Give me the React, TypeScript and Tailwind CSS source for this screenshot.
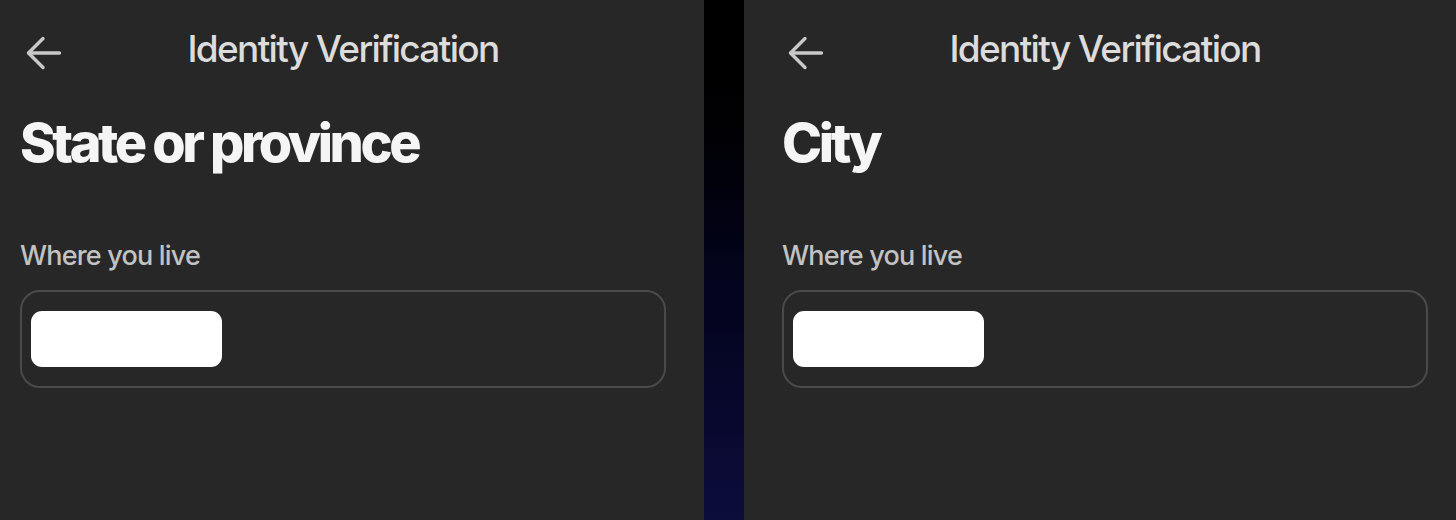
function BackArrow() {
  return (
    <svg viewBox="0 0 36 36" className="w-[36px] h-[36px] ml-[6px] mt-[6px]" fill="none" stroke="#c9c9c9" strokeWidth="3.4" strokeLinecap="round" strokeLinejoin="round">
      <path d="M33.5 18H3" />
      <path d="M17 3.5L2.5 18L17 32.5" />
    </svg>
  )
}

function Screen({ title }: { title: string }) {
  return (
    <div className="w-[722px] shrink-0 h-full bg-[#272727] px-[38px]">
      <div className="relative h-[100px] flex items-center">
        <BackArrow />
        <span className="absolute inset-x-0 top-[24px] text-center text-[37px] leading-[50px] font-medium tracking-[-0.045em] text-[#dcdcdc]">
          Identity Verification
        </span>
      </div>
      <h1 className="mt-[10px] text-[54px] leading-[66px] font-extrabold tracking-[-0.063em] text-[#f5f5f5]">{title}</h1>
      <div className="mt-[62px] text-[27px] leading-[36px] font-medium tracking-[-0.03em] text-[#c2c2c2]">Where you live</div>
      <div className="mt-[16px] w-[646px] h-[98px] rounded-[20px] border-2 border-[#4a4a4a] flex items-center px-[9px]">
        <div className="w-[191px] h-[56px] rounded-[11px] bg-white" />
      </div>
    </div>
  )
}

export default function App() {
  return (
    <div
      className="w-[1456px] h-[520px] overflow-hidden flex bg-[#272727]"
      style={{ fontFamily: 'Inter, "Liberation Sans", sans-serif' }}
    >
      <div className="ml-[-18px] flex h-full">
        <Screen title="State or province" />
        <div className="w-[40px] shrink-0 h-full bg-gradient-to-b from-[#000000] via-[#03031a] to-[#0d0d3c]" />
        <Screen title="City" />
      </div>
    </div>
  )
}
